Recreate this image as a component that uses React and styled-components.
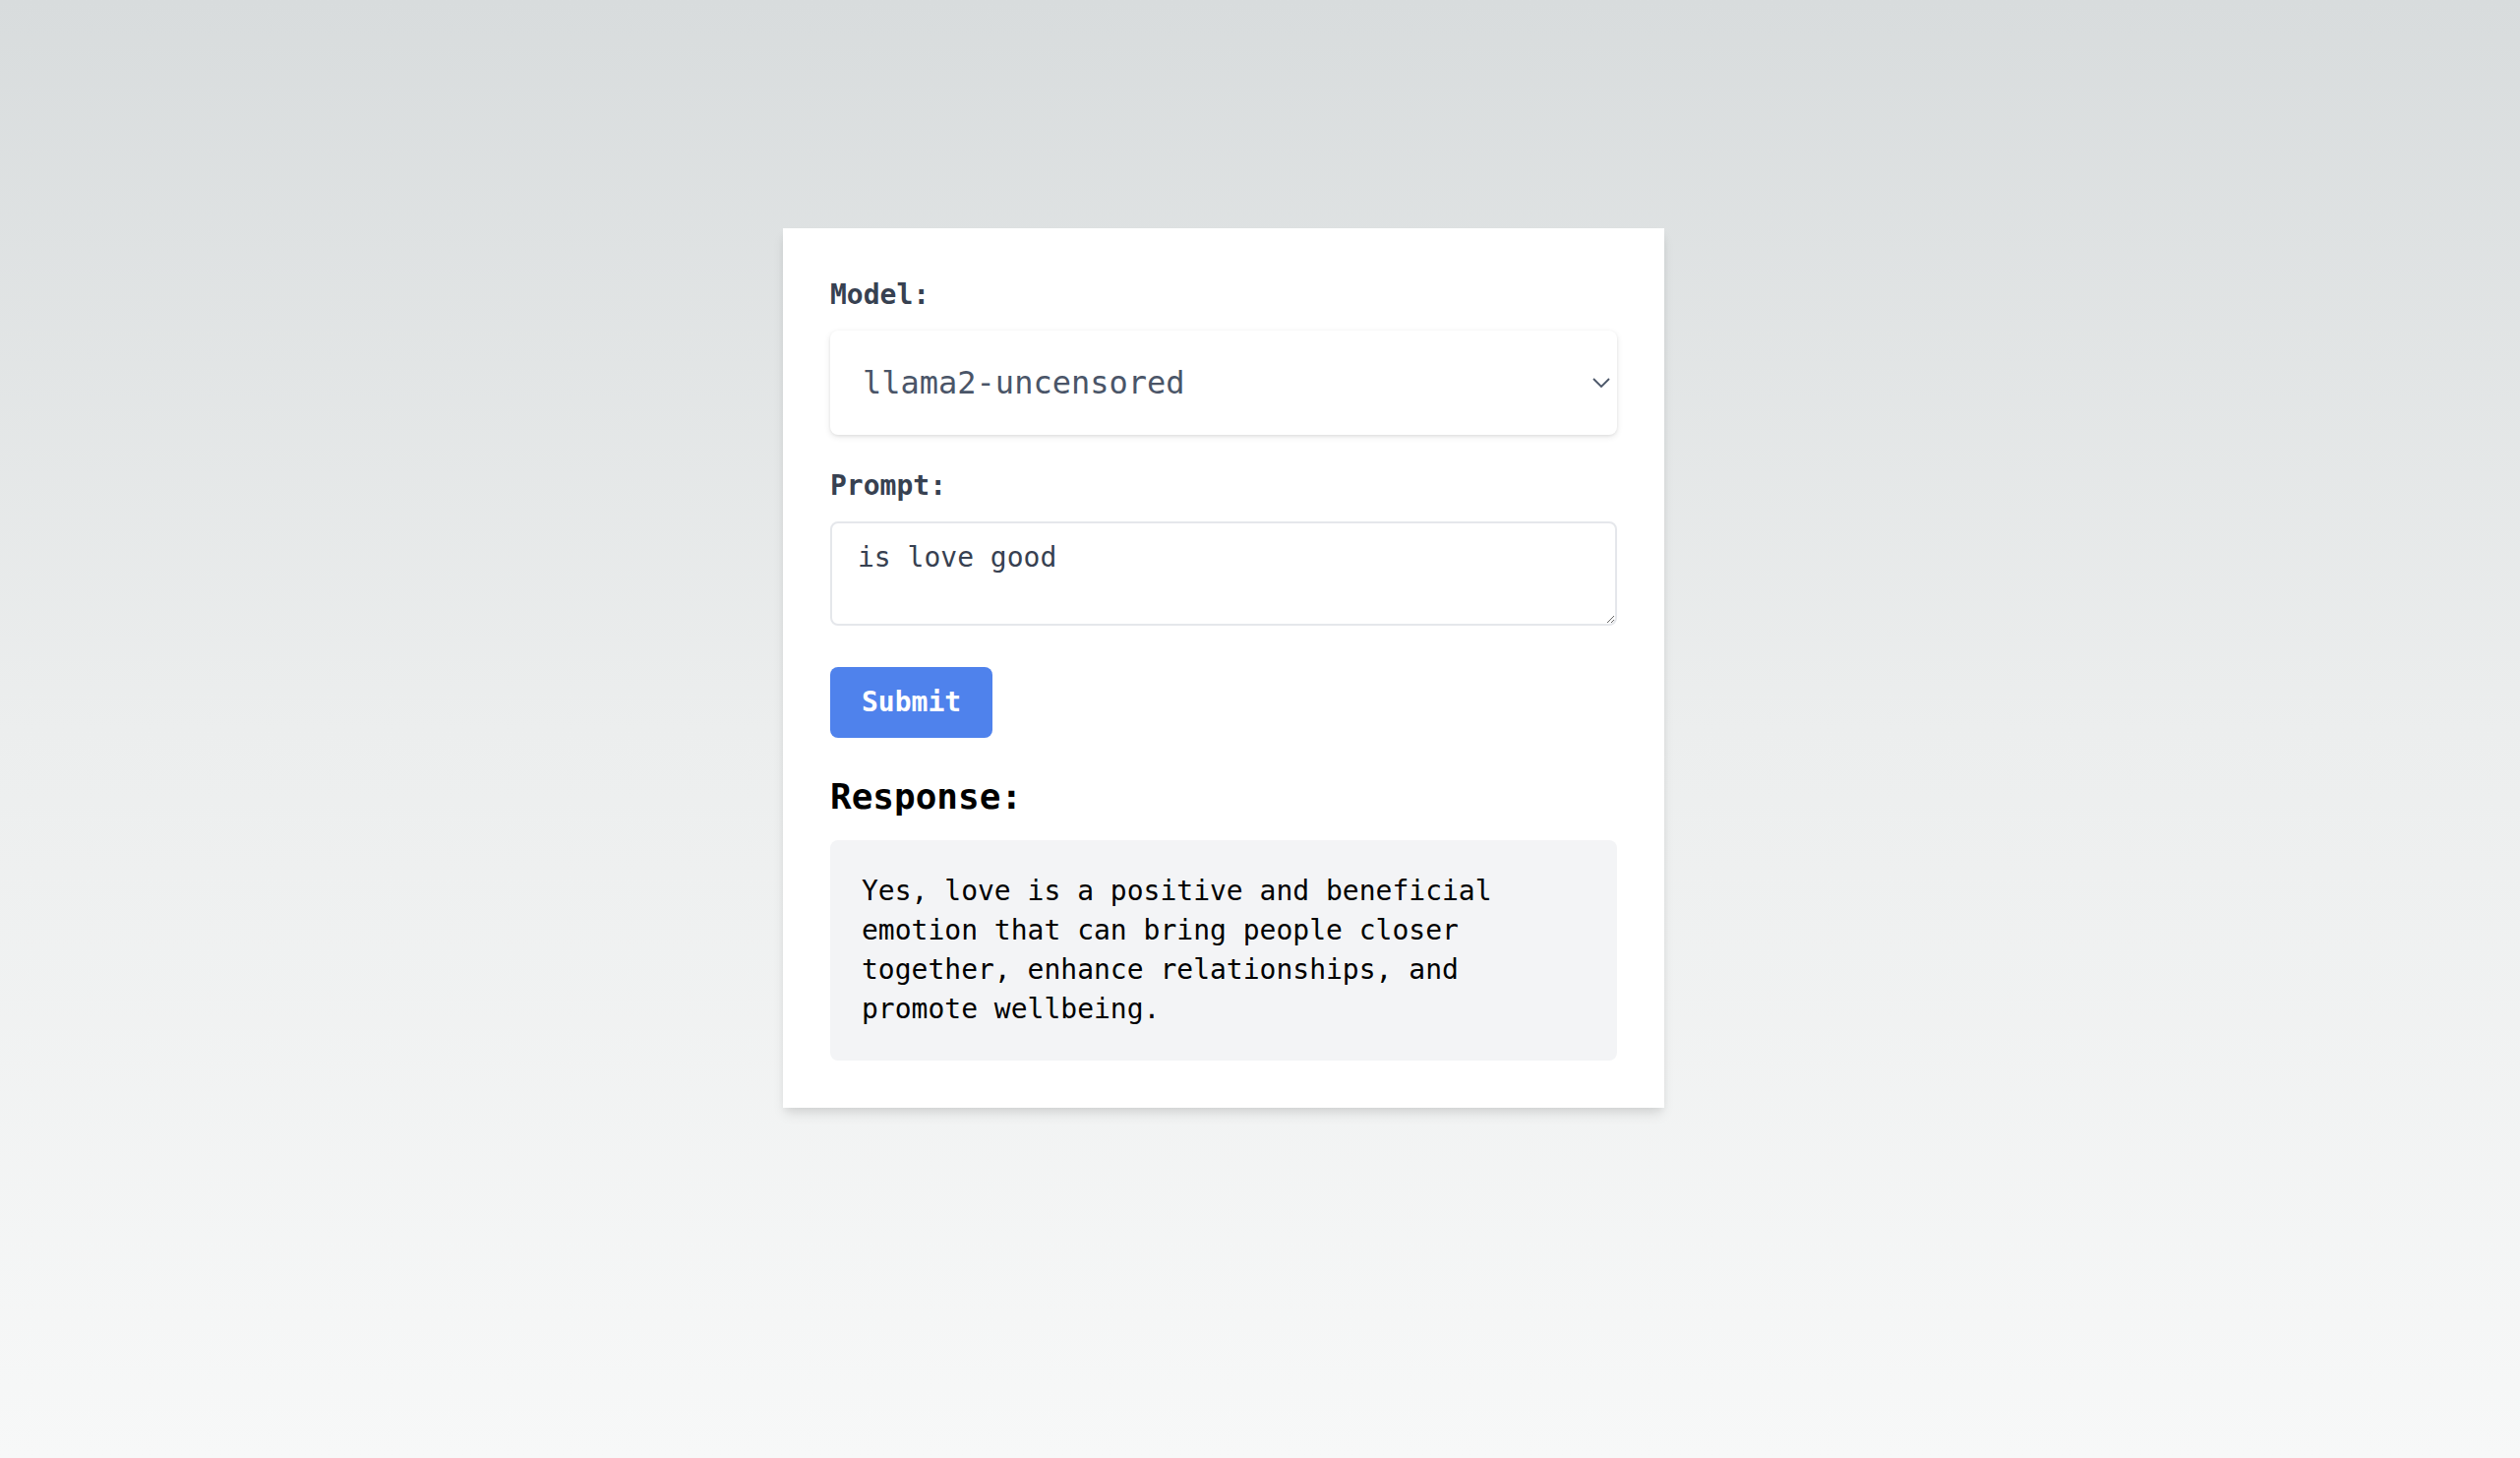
import React, { useState } from 'react';
import styled, { createGlobalStyle } from 'styled-components';

const GlobalStyle = createGlobalStyle`
  * { box-sizing: border-box; }
  html, body { margin: 0; padding: 0; }
  body {
    font-family: "DejaVu Sans Mono", "Liberation Mono", monospace;
    background: linear-gradient(180deg, #d8dcdd 0%, #eceeee 50%, #f7f8f8 100%);
    min-height: 100vh;
  }
`;

const Page = styled.div`
  min-height: 100vh;
  display: flex;
  justify-content: center;
  align-items: flex-start;
  padding: 232px 74px 0 0;
`;

const Card = styled.div`
  width: 896px;
  background: #ffffff;
  padding: 48px;
  box-shadow: 0 8px 12px -2px rgba(0, 0, 0, 0.1), 0 4px 8px -2px rgba(0, 0, 0, 0.06);
`;

const Label = styled.label`
  display: block;
  font-size: 28px;
  line-height: 40px;
  font-weight: 700;
  color: #374151;
  margin-bottom: 16px;
`;

const SelectWrap = styled.div`
  position: relative;
  margin-bottom: 32px;
`;

const Select = styled.select`
  display: block;
  width: 100%;
  height: 106px;
  appearance: none;
  border: none;
  border-radius: 8px;
  background: #ffffff;
  box-shadow: 0 2px 6px rgba(0, 0, 0, 0.1), 0 1px 3px rgba(0, 0, 0, 0.06);
  padding: 0 60px 0 33px;
  font-family: inherit;
  font-size: 32px;
  color: #4a5568;
  outline: none;
`;

const Chevron = styled.svg`
  position: absolute;
  right: 6px;
  top: 47px;
  pointer-events: none;
`;

const Prompt = styled.textarea`
  display: block;
  width: 100%;
  height: 106px;
  margin-top: 2px;
  border: 2px solid #e5e7eb;
  border-radius: 8px;
  padding: 15px 26px 12px;
  font-family: inherit;
  font-size: 28px;
  line-height: 40px;
  color: #374151;
  margin-bottom: 42px;
  outline: none;
`;

const Button = styled.button`
  display: block;
  height: 72px;
  padding: 0 32px;
  border: none;
  border-radius: 8px;
  background: #4f82ec;
  color: #ffffff;
  font-family: inherit;
  font-size: 28px;
  font-weight: 700;
  line-height: 40px;
  margin-bottom: 32px;
  cursor: pointer;
`;

const Heading = styled.h2`
  margin: 0 0 16px;
  font-size: 36px;
  line-height: 56px;
  font-weight: 700;
  color: #000000;
`;

const ResponseBox = styled.div`
  background: #f3f4f6;
  border-radius: 8px;
  padding: 32px;
  font-size: 28px;
  line-height: 40px;
  color: #000000;
`;

export default function App() {
  const [model, setModel] = useState('llama2-uncensored');
  const [prompt, setPrompt] = useState('is love good');

  return (
    <>
      <GlobalStyle />
      <Page>
        <Card>
          <Label htmlFor="model">Model:</Label>
          <SelectWrap>
            <Select id="model" value={model} onChange={(e) => setModel(e.target.value)}>
              <option value="llama2-uncensored">llama2-uncensored</option>
              <option value="llama2">llama2</option>
              <option value="mistral">mistral</option>
            </Select>
            <Chevron width="20" height="12" viewBox="0 0 20 12">
              <path d="M2 2 L10 10 L18 2" fill="none" stroke="#4a5568" strokeWidth="1.8" />
            </Chevron>
          </SelectWrap>
          <Label htmlFor="prompt">Prompt:</Label>
          <Prompt id="prompt" value={prompt} onChange={(e) => setPrompt(e.target.value)} />
          <Button>Submit</Button>
          <Heading>Response:</Heading>
          <ResponseBox>
            Yes, love is a positive and beneficial emotion that can bring people closer together, enhance relationships, and promote wellbeing.
          </ResponseBox>
        </Card>
      </Page>
    </>
  );
}
